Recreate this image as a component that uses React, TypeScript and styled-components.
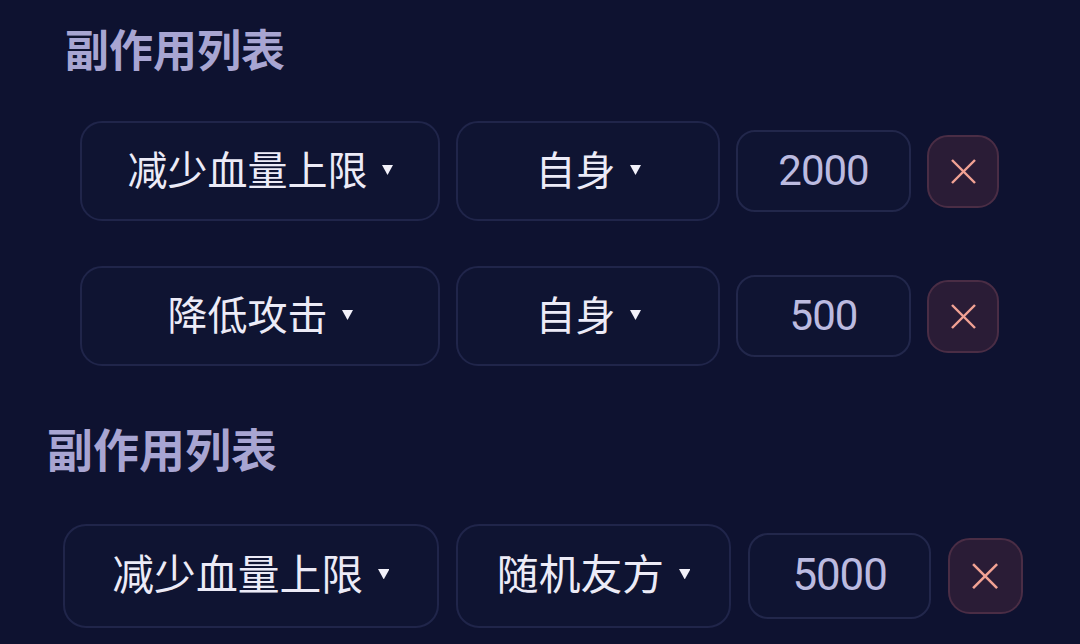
import React from "react";
import styled, { createGlobalStyle } from "styled-components";

const GlobalStyle = createGlobalStyle`
  html, body {
    margin: 0;
    padding: 0;
    background: #0e1230;
  }
  body {
    width: 1080px;
    height: 644px;
    overflow: hidden;
    font-family: "Noto Sans CJK SC", "Noto Sans", sans-serif;
  }
`;

const Page = styled.div`
  width: 1080px;
  height: 644px;
  background: #0e1230;
  display: flex;
  flex-direction: column;
`;

const Section = styled.section<{ $scale: number; $left: number; $top: number }>`
  --s: ${(p) => p.$scale};
  display: flex;
  flex-direction: column;
  padding-left: ${(p) => p.$left}px;
  margin-top: ${(p) => p.$top}px;
`;

const Title = styled.h2`
  margin: 0;
  font-size: calc(44px * var(--s));
  line-height: calc(56px * var(--s));
  font-weight: 700;
  color: #a8a5d2;
  letter-spacing: 0;
`;

const List = styled.div`
  display: flex;
  flex-direction: column;
  gap: calc(45px * var(--s));
  margin-top: calc(45px * var(--s));
  padding-left: calc(15px * var(--s));
`;

const Row = styled.div`
  display: flex;
  align-items: center;
  gap: calc(16px * var(--s));
`;

const Select = styled.div<{ $w: number }>`
  box-sizing: border-box;
  width: calc(${(p) => p.$w}px * var(--s));
  height: calc(100px * var(--s));
  border: 2px solid #20254a;
  border-radius: calc(22px * var(--s));
  background: #0f1432;
  display: flex;
  align-items: center;
  justify-content: center;
  gap: calc(14px * var(--s));
  padding-bottom: calc(6px * var(--s));
  color: #ecebf7;
  font-size: calc(40px * var(--s));
  line-height: 1;
`;

const Caret = styled.svg`
  width: calc(11px * var(--s));
  height: calc(10px * var(--s));
  margin-top: calc(3px * var(--s));
  fill: #f2f1fa;
`;

const Amount = styled.div`
  box-sizing: border-box;
  width: calc(175px * var(--s));
  height: calc(82px * var(--s));
  border: 2px solid #22274b;
  border-radius: calc(19px * var(--s));
  background: #0f1432;
  display: flex;
  align-items: center;
  justify-content: center;
  color: #bcbbe0;
  font-family: Roboto, "Liberation Sans", sans-serif;
  font-size: calc(42px * var(--s));
  letter-spacing: calc(-1px * var(--s));
  line-height: 1;
`;

const RemoveButton = styled.button`
  box-sizing: border-box;
  width: calc(72px * var(--s));
  height: calc(73px * var(--s));
  border: 2px solid #4a2d45;
  border-radius: calc(21px * var(--s));
  background: #2a1c36;
  padding: 0;
  display: flex;
  align-items: center;
  justify-content: center;
  cursor: pointer;
`;

const Cross = styled.svg`
  width: calc(27px * var(--s));
  height: calc(27px * var(--s));
  stroke: #f2a294;
  stroke-width: 2.4;
  fill: none;
`;

type Effect = { kind: string; kindWidth: number; target: string; targetWidth: number; value: string };

const Dropdown = ({ label, width }: { label: string; width: number }) => (
  <Select $w={width}>
    <span>{label}</span>
    <Caret viewBox="0 0 11 10">
      <polygon points="0,0 11,0 5.5,10" />
    </Caret>
  </Select>
);

const EffectRow = ({ e }: { e: Effect }) => (
  <Row>
    <Dropdown label={e.kind} width={e.kindWidth} />
    <Dropdown label={e.target} width={e.targetWidth} />
    <Amount>{e.value}</Amount>
    <RemoveButton aria-label="删除">
      <Cross viewBox="0 0 27 27">
        <line x1="2" y1="2" x2="25" y2="25" />
        <line x1="25" y1="2" x2="2" y2="25" />
      </Cross>
    </RemoveButton>
  </Row>
);

const first: Effect[] = [
  { kind: "减少血量上限", kindWidth: 360, target: "自身", targetWidth: 264, value: "2000" },
  { kind: "降低攻击", kindWidth: 360, target: "自身", targetWidth: 264, value: "500" },
];

const second: Effect[] = [
  { kind: "减少血量上限", kindWidth: 360, target: "随机友方", targetWidth: 264, value: "5000" },
];

export default function App() {
  return (
    <>
      <GlobalStyle />
      <Page>
        <Section $scale={1} $left={65} $top={20}>
          <Title>副作用列表</Title>
          <List>
            {first.map((e, i) => (
              <EffectRow key={i} e={e} />
            ))}
          </List>
        </Section>
        <Section $scale={1.045} $left={47} $top={52}>
          <Title>副作用列表</Title>
          <List>
            {second.map((e, i) => (
              <EffectRow key={i} e={e} />
            ))}
          </List>
        </Section>
      </Page>
    </>
  );
}
